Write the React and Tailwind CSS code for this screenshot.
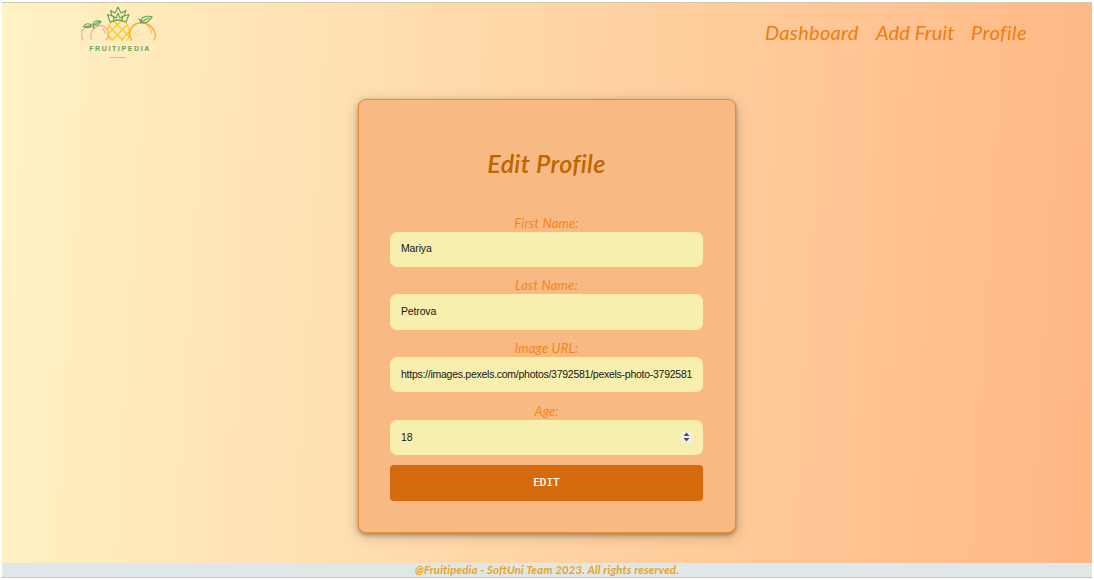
const fields = [
  { label: 'First Name:', value: 'Mariya', labelClass: 'tracking-[0.2px]', valueClass: 'tracking-[-0.15px]' },
  { label: 'Last Name:', value: 'Petrova', labelClass: 'tracking-[0.2px]', valueClass: 'tracking-[-0.15px]' },
  { label: 'Image URL:', value: 'https://images.pexels.com/photos/3792581/pexels-photo-3792581', labelClass: 'tracking-[0.2px]', valueClass: 'tracking-[-0.262px]' },
  { label: 'Age:', value: '18', labelClass: 'tracking-[0px]', valueClass: 'tracking-[-0.15px]', stepper: true },
];

function Logo() {
  return (
    <svg width="80" height="56" viewBox="0 0 80 56" fill="none" strokeLinecap="round" strokeLinejoin="round" role="img" aria-label="Fruitipedia">
      <g stroke="#f4ad99" strokeWidth="1.200">
        <path d="M4 34C0.800 28 3.500 20.500 10 20.500C12 20.300 14 21.500 15 22.500C19 18 26 19 28 24" />
        <path d="M15 22.500C11.500 25 11 30 12.500 33M28 24C30 27 30 31 27 34M24 23C25 24 26 25 26 27" />
      </g>
      <path d="M15 22.500L14 18M13 19.500C10 16.500 6 17.500 4.500 20.500C8 22.500 11 22 13 19.500ZM14 18C15 14.500 19 14.500 22 15.500C20 19.500 17 20 14 18ZM6.500 20.500L12 19.500M16 18L20 16" stroke="#5ca653" strokeWidth="1.100" />
      <g stroke="#fbc72e" strokeWidth="1.300">
        <path d="M31 34C25.500 26 30 13.500 39 13.500C48.500 13.500 53 25 48.500 34" />
        <path d="M31 21L43.500 34M35 15.500L49 29M29 29L33.500 34M47 20L33.500 34M42 15L29 28M49.500 26.500L42.500 34" />
      </g>
      <path d="M39 14L31 16L28.500 8.500L33 10L31.500 4.500L36 7L39 1L42 7L47 4.500L45 10L50 8.500L47 16L39 14ZM35 14L34 10L37 12L39 7L41 12L44 10L43 14" stroke="#5ca653" strokeWidth="1.100" />
      <g stroke="#f6a72c" strokeWidth="1.300">
        <path d="M52.500 34C47.500 25 54 17 62 17C73 17 79 27 75 34" />
        <path d="M68 20C71 21.500 72.500 24 72.800 27" strokeWidth=".9" />
        <path d="M56 27V27.100M59 25V25.100M58 29V29.100M55 30V30.100M61 28V28.100" strokeWidth=".9" />
      </g>
      <path d="M62 17C61.500 15 61 14 60 13M62.500 16C61 11.500 66 9.500 73 10.500C71 15 67 18 62.500 16ZM63 15.500L70 12" stroke="#5ca653" strokeWidth="1.150" />
      <text x="10.200" y="45.300" fill="#64a65e" fontFamily="Liberation Sans, sans-serif" fontSize="6.900" fontWeight="700" textLength="60">FRUITIPEDIA</text>
      <path d="M31 51.500H46" stroke="#f6aa91" strokeWidth="1.100" />
    </svg>
  );
}

function Stepper() {
  return (
    <svg className="shrink-0" width="11" height="12" viewBox="0 0 11 12" aria-hidden="true">
      <path d="M0 0H11V12H0Z" fill="#efefef" />
      <path d="M2.500 5L5.500 1.500L8.500 5ZM2.500 7L5.500 10.500L8.500 7Z" fill="#505050" />
    </svg>
  );
}

function Field({ label, value, labelClass, valueClass, stepper }) {
  return (
    <div className="flex h-[62.700px] flex-col">
      <label className={`h-[17px] text-center font-['Lato',sans-serif] text-[13px] leading-[17px] text-[#f28518] italic ${labelClass}`}>{label}</label>
      <div className="flex h-[35.500px] shrink-0 items-center justify-between rounded-[7px] bg-[#f8eeae] pr-[11px] pl-[11px] text-[10.500px] text-[#171717]">
        <span className={`whitespace-nowrap ${valueClass}`}>{value}</span>
        {stepper && <Stepper />}
      </div>
    </div>
  );
}

export default function App() {
  return (
    <div className="h-[580px] overflow-hidden bg-white px-[2px] pt-[2px] font-['Liberation_Sans',sans-serif]">
      <div className="flex h-[576px] flex-col border-t border-[#cfc9b0] bg-[linear-gradient(93.500deg,#fff2c5_0%,#ffb784_100%)]">
        <header className="flex h-[96px] shrink-0 items-start justify-between pr-[65px] pl-[77px]">
          <div className="pt-[3px]"><Logo /></div>
          <nav className="flex pt-[15px] font-['Lato',sans-serif] text-[20px] leading-[28px] whitespace-nowrap text-[#ed7d10] italic">
            <a className="w-[111px] tracking-[0.3px]">Dashboard</a>
            <a className="w-[95px] tracking-[0.15px]">Add Fruit</a>
            <a className="w-[56px] tracking-[0.45px] [font-variant-ligatures:none]">Profile</a>
          </nav>
        </header>
        <main className="flex flex-1 justify-center">
          <form className="flex h-[434px] w-[378px] flex-col rounded-[8px] border border-[#e88d31] bg-[#f9b982] pr-[32px] pl-[31px] shadow-[0_2px_4px_rgba(0,0,0,0.3),0_3px_14px_rgba(0,0,0,0.2)]">
            <h1 className="mt-[45px] h-[36px] text-center font-['Lato',sans-serif] text-[25px] leading-[36px] font-semibold tracking-[0.35px] text-[#bd6500] italic [font-variant-ligatures:none]">Edit Profile</h1>
            <div className="mt-[33.600px] flex flex-col">
              {fields.map((field) => <Field key={field.label} {...field} />)}
            </div>
            <button type="button" className="h-[35.500px] shrink-0 rounded-[4px] bg-[#d56b0c] pt-[1px] font-['DejaVu_Sans_Mono',monospace] text-[11px] text-white [-webkit-text-stroke:0.2px_white]">EDIT</button>
          </form>
        </main>
        <footer className="flex h-[15px] shrink-0 items-center justify-center border-b border-[#c5c6d8] bg-[#dfe7e9] font-['Lato',sans-serif] text-[11.500px] font-bold tracking-[0.1px] whitespace-nowrap text-[#eba51b] italic">@Fruitipedia - SoftUni Team 2023. All rights reserved.</footer>
      </div>
    </div>
  );
}
